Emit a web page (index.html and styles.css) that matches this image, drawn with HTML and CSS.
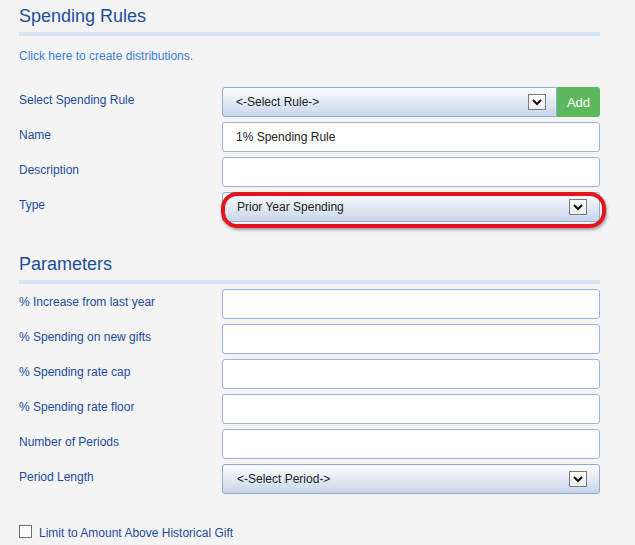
FILE: index.html
```html
<!DOCTYPE html>
<html lang="en">
<head>
  <meta charset="UTF-8" />
  <title>Spending Rules</title>
  <link rel="stylesheet" href="styles.css">
</head>
<body>
  <div class="panel">
    <h2>Spending Rules</h2>
    <div class="bar"></div>
    <a class="link" href="#">Click here to create distributions.</a>

    <div class="rows first">
      <div class="row">
        <label>Select Spending Rule</label>
        <div class="field">
          <div class="select short">
            <span>&lt;-Select Rule-&gt;</span>
            <span class="arrow"><svg width="16" height="14" viewBox="0 0 16 14"><polyline points="4,5 8,9 12,5" fill="none" stroke="#111" stroke-width="2"/></svg></span>
          </div>
          <button class="add">Add</button>
        </div>
      </div>
      <div class="row">
        <label>Name</label>
        <div class="field"><input class="text" type="text" value="1% Spending Rule"></div>
      </div>
      <div class="row">
        <label>Description</label>
        <div class="field"><input class="text" type="text"></div>
      </div>
      <div class="row">
        <label>Type</label>
        <div class="field marked">
          <div class="select">
            <span>Prior Year Spending</span>
            <span class="arrow"><svg width="16" height="14" viewBox="0 0 16 14"><polyline points="4,5 8,9 12,5" fill="none" stroke="#111" stroke-width="2"/></svg></span>
          </div>
          <div class="oval"></div>
        </div>
      </div>
    </div>

    <h2 class="section">Parameters</h2>
    <div class="bar"></div>

    <div class="rows params">
      <div class="row">
        <label>% Increase from last year</label>
        <div class="field"><input class="text" type="text"></div>
      </div>
      <div class="row">
        <label>% Spending on new gifts</label>
        <div class="field"><input class="text" type="text"></div>
      </div>
      <div class="row">
        <label>% Spending rate cap</label>
        <div class="field"><input class="text" type="text"></div>
      </div>
      <div class="row">
        <label>% Spending rate floor</label>
        <div class="field"><input class="text" type="text"></div>
      </div>
      <div class="row">
        <label>Number of Periods</label>
        <div class="field"><input class="text" type="text"></div>
      </div>
      <div class="row">
        <label>Period Length</label>
        <div class="field">
          <div class="select">
            <span>&lt;-Select Period-&gt;</span>
            <span class="arrow"><svg width="16" height="14" viewBox="0 0 16 14"><polyline points="4,5 8,9 12,5" fill="none" stroke="#111" stroke-width="2"/></svg></span>
          </div>
        </div>
      </div>
    </div>

    <label class="check"><input type="checkbox"><span>Limit to Amount Above Historical Gift</span></label>
  </div>
</body>
</html>
```

FILE: styles.css
```css
* { box-sizing: border-box; }
body {
  margin: 0;
  padding: 6px 35px 0 19px;
  background: #f4f4f4;
  font-family: "Liberation Sans", Arial, sans-serif;
  font-size: 12px;
  color: #1d4b9c;
}
.panel {
  width: 581px;
}
h2 {
  margin: 0;
  font-size: 18px;
  font-weight: normal;
  line-height: 21px;
  color: #1e4d9b;
}
/* row margins collapse into this one */
h2.section {
  margin-top: 32px;
}
.bar {
  height: 4px;
  margin-top: 5px;
  background: #d7e4f4;
}
.link {
  display: block;
  margin-top: 13px;
  line-height: 14px;
  color: #3d7ed6;
  text-decoration: none;
}
.rows.first {
  margin-top: 24px;
}
.rows.params {
  margin-top: 5px;
}
.row {
  display: flex;
  height: 30px;
  margin-bottom: 5px;
}
.row label {
  width: 203px;
  padding-top: 6px;
  line-height: 14px;
}
.field {
  flex: 1;
  display: flex;
  position: relative;
}
.text {
  width: 100%;
  height: 30px;
  margin: 0;
  padding: 0 13px;
  border: 1px solid #9cb5de;
  border-radius: 3px;
  background: #fff;
  font-family: inherit;
  font-size: 12px;
  color: #222;
  outline: none;
}
.select {
  flex: 1;
  display: flex;
  align-items: center;
  justify-content: space-between;
  height: 30px;
  padding: 0 12px 0 14px;
  border: 1px solid #8faad6;
  border-radius: 3px;
  background: linear-gradient(#fdfdfe, #c8d6ea);
  color: #222;
}
.select.short {
  border-radius: 3px 0 0 3px;
  padding-left: 13px;
  padding-right: 10px;
}
.arrow {
  display: flex;
  width: 18px;
  height: 16px;
  border: 1px solid #7a7a7a;
  background: linear-gradient(#fff, #ececec);
}
.add {
  width: 43px;
  height: 30px;
  border: none;
  border-radius: 0 3px 3px 0;
  background: #5cb85c;
  color: #fff;
  font-family: inherit;
  font-size: 13px;
  cursor: pointer;
}
.oval {
  position: absolute;
  left: -1px;
  top: 0;
  right: -6px;
  bottom: -6px;
  border: 4px solid #e5131b;
  border-radius: 16px;
  box-shadow: 1px 2px 3px rgba(0,0,0,0.35), inset 0 0 1px rgba(0,0,0,0.2);
}
.check {
  display: flex;
  align-items: flex-start;
  margin-top: 31px;
  line-height: 14px;
}
.check input {
  appearance: none;
  width: 13px;
  height: 13px;
  margin: 0 7px 0 0;
  border: 1px solid #707070;
  background: #fbfbfb;
}
.check span {
  padding-top: 1px;
}
```
